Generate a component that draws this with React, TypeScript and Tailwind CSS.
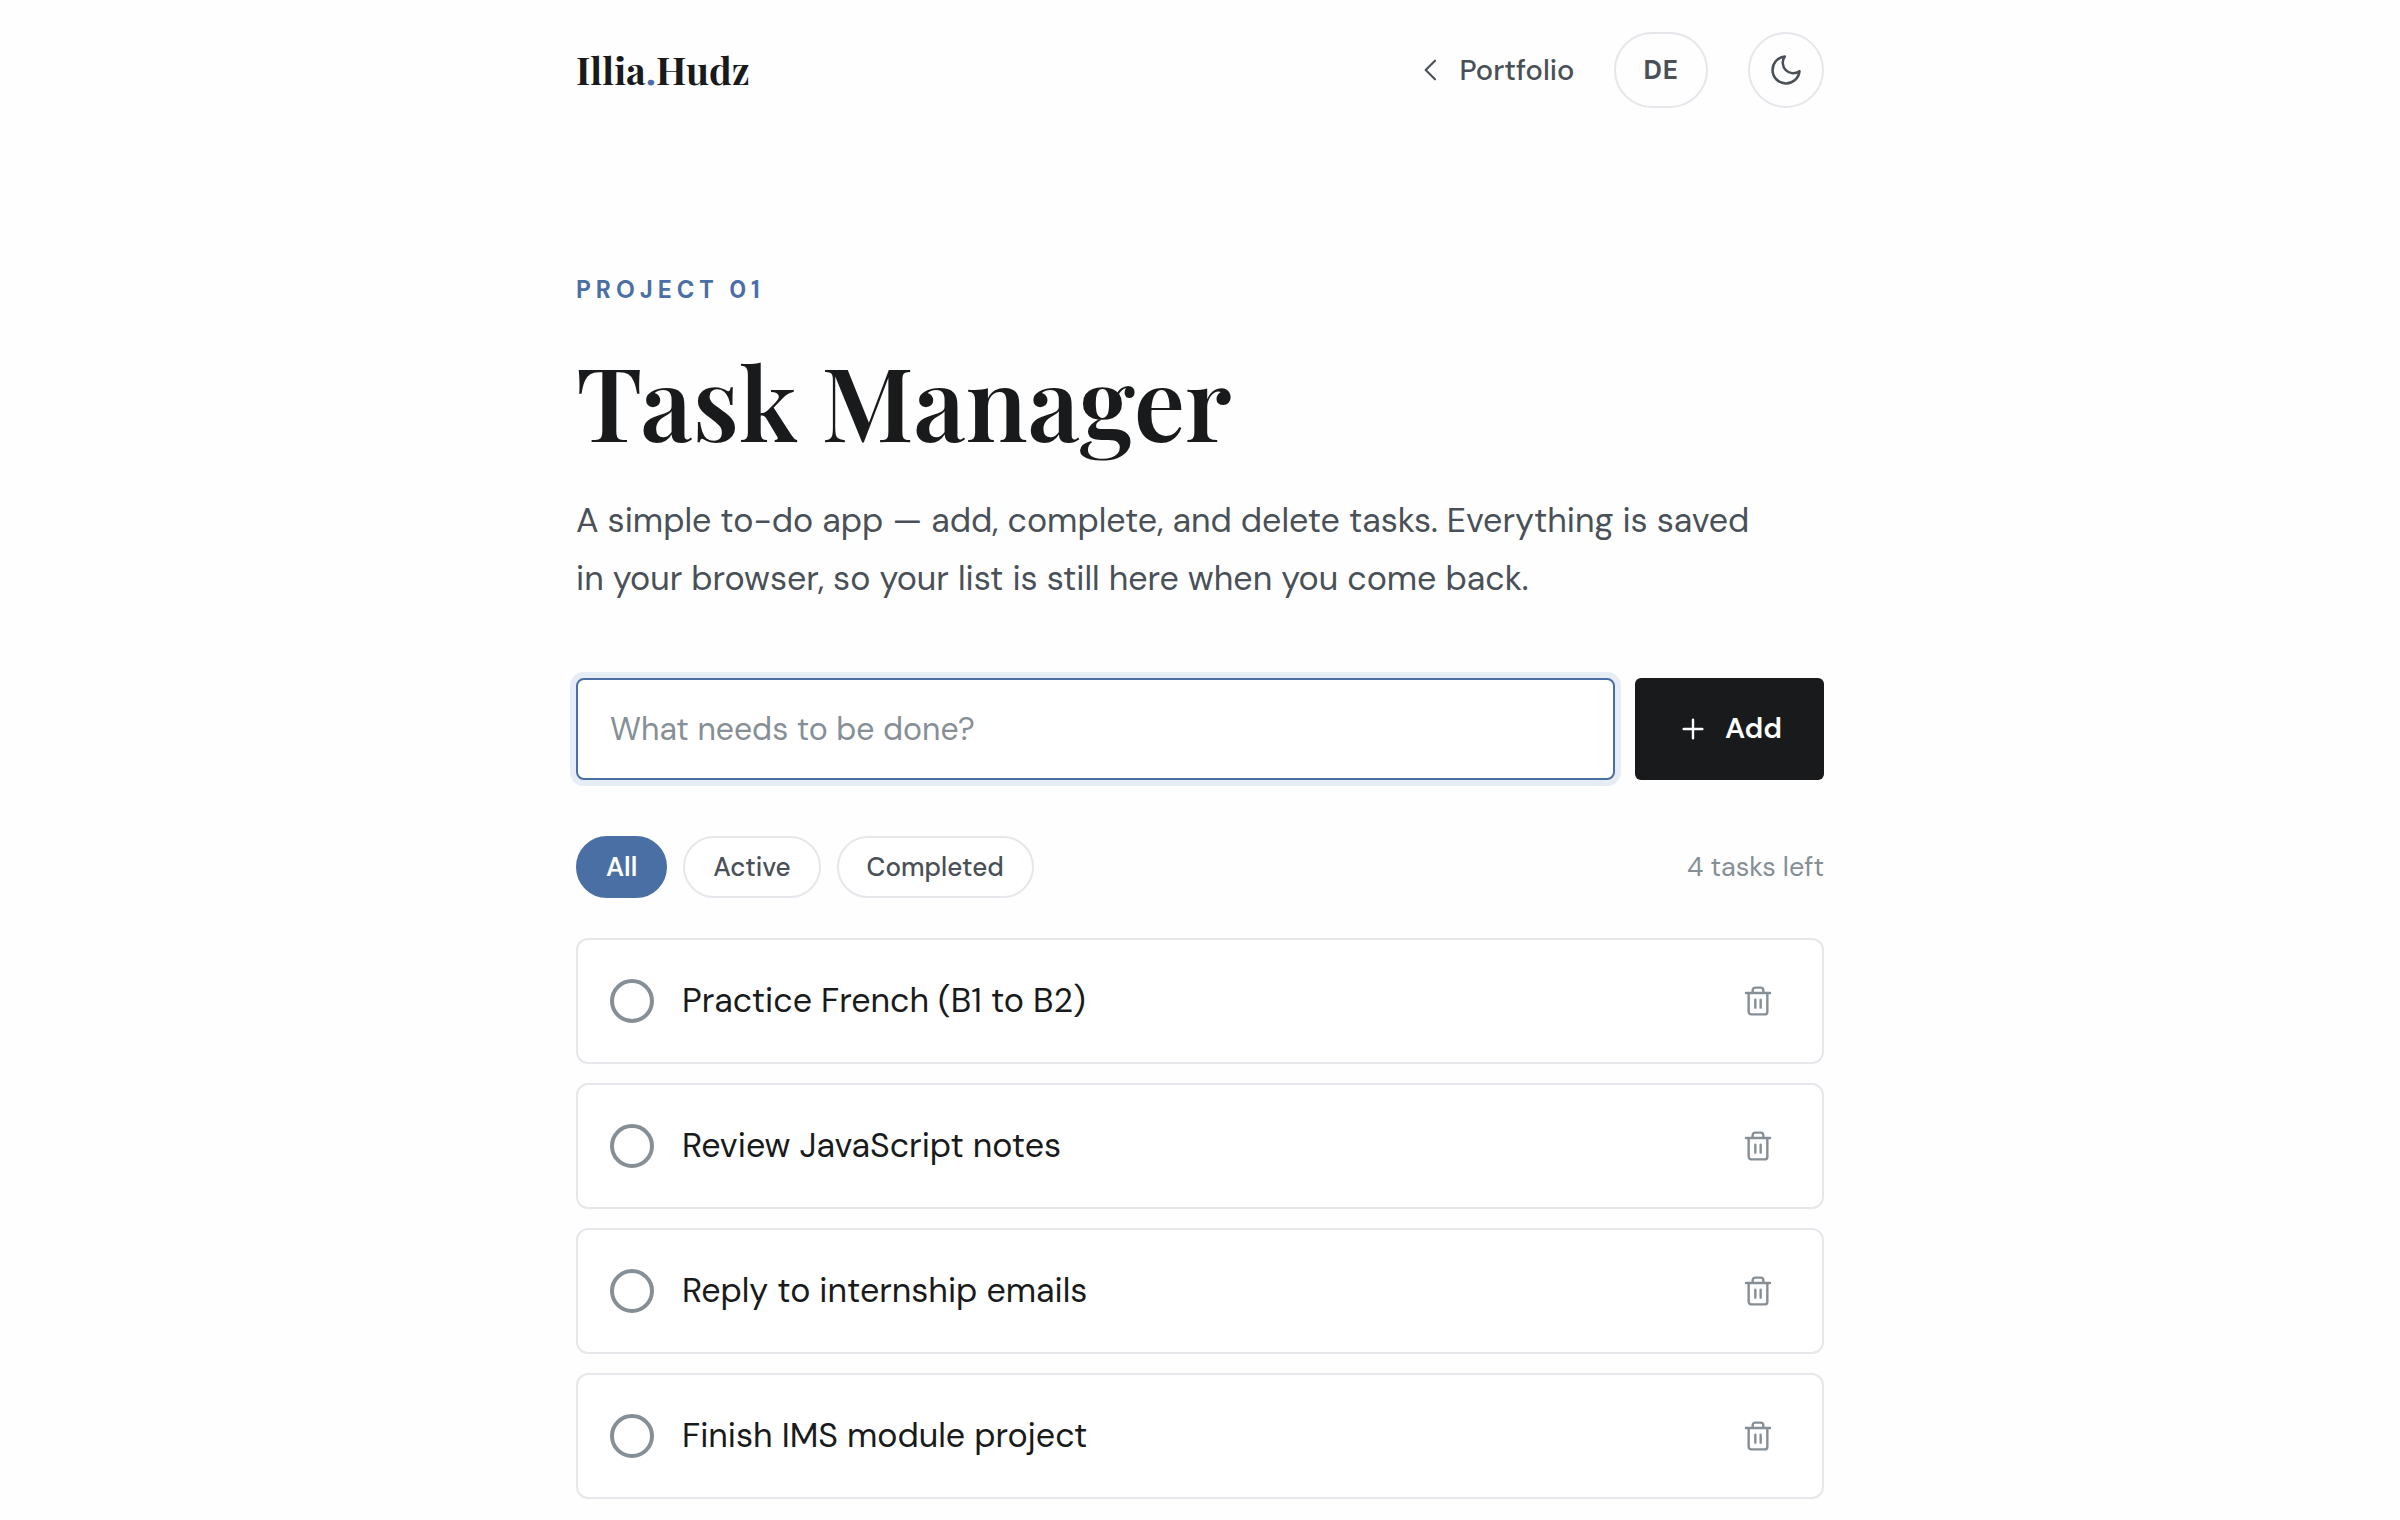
import { useState, type FormEvent } from 'react'

type Task = { id: number; text: string; done: boolean }
type Filter = 'All' | 'Active' | 'Completed'

const initialTasks: Task[] = [
  { id: 1, text: 'Practice French (B1 to B2)', done: false },
  { id: 2, text: 'Review JavaScript notes', done: false },
  { id: 3, text: 'Reply to internship emails', done: false },
  { id: 4, text: 'Finish IMS module project', done: false },
]

const filters: Filter[] = ['All', 'Active', 'Completed']

const stroke = {
  viewBox: '0 0 24 24',
  fill: 'none',
  stroke: 'currentColor',
  strokeLinecap: 'round',
  strokeLinejoin: 'round',
  'aria-hidden': true,
} as const

function Header() {
  return (
    <header className="flex items-center justify-between py-8">
      <a
        href="#home"
        className="font-['Playfair_Display','Liberation_Serif',serif] text-[38px] leading-[52px] font-bold"
      >
        Illia<span className="text-[#4a6fa5]">.</span>Hudz
      </a>
      <nav className="flex items-center gap-10 text-[#495057]">
        <a href="#portfolio" className="flex items-center gap-3 text-[29px] leading-10 font-medium">
          <svg {...stroke} strokeWidth={1.6} className="size-8">
            <path d="M15 19l-7-7 7-7" />
          </svg>
          Portfolio
        </a>
        <button
          type="button"
          className="h-[76px] rounded-full border-2 border-[#e6e6ec] px-[27px] text-[26px] font-bold tracking-[1px]"
        >
          DE
        </button>
        <button
          type="button"
          aria-label="Toggle dark theme"
          className="flex size-[76px] items-center justify-center rounded-full border-2 border-[#e6e6ec]"
        >
          <svg {...stroke} strokeWidth={1.7} className="size-9">
            <path d="M21 12.79A9 9 0 1 1 11.21 3 7 7 0 0 0 21 12.79z" />
          </svg>
        </button>
      </nav>
    </header>
  )
}

function TaskRow({ task, onToggle, onDelete }: { task: Task; onToggle: () => void; onDelete: () => void }) {
  return (
    <li className="flex h-[126px] items-center rounded-xl border-2 border-[#e6e6ec] bg-white px-8">
      <label className="flex min-w-0 flex-1 items-center gap-7 text-[34px] leading-[54px]">
        <input
          type="checkbox"
          checked={task.done}
          onChange={onToggle}
          className="size-11 shrink-0 appearance-none rounded-full border-4 border-[#868e96] checked:border-[#4a6fa5] checked:bg-[#4a6fa5]"
        />
        <span>{task.text}</span>
      </label>
      <button
        type="button"
        aria-label={`Delete ${task.text}`}
        onClick={onDelete}
        className="flex size-16 items-center justify-center text-[#868e96]"
      >
        <svg {...stroke} strokeWidth={1.8} className="size-8">
          <path d="M3 6h18M19 6v14a2 2 0 0 1-2 2H7a2 2 0 0 1-2-2V6M8 6V4a2 2 0 0 1 2-2h4a2 2 0 0 1 2 2v2M10 11v6M14 11v6" />
        </svg>
      </button>
    </li>
  )
}

export default function App() {
  const [tasks, setTasks] = useState(initialTasks)
  const [filter, setFilter] = useState<Filter>('All')
  const [draft, setDraft] = useState('')

  const left = tasks.filter((t) => !t.done).length
  const visible = tasks.filter((t) => filter === 'All' || t.done === (filter === 'Completed'))

  const add = (e: FormEvent) => {
    e.preventDefault()
    if (!draft.trim()) return
    setTasks([{ id: Date.now(), text: draft.trim(), done: false }, ...tasks])
    setDraft('')
  }

  return (
    <div className="min-h-screen bg-[#fefefe] px-12 font-['DM_Sans',Inter,sans-serif] text-[#181a1b]">
      <div className="mx-auto max-w-[1248px]">
        <Header />
        <main className="pt-[130px]">
          <p className="text-2xl leading-10 font-bold tracking-[5px] text-[#4a6fa5] uppercase">Project 01</p>
          <h1 className="mt-[30px] font-['Playfair_Display','Liberation_Serif',serif] text-[102px] leading-[120px] font-semibold">
            Task Manager
          </h1>
          <p className="mt-8 max-w-[1200px] text-[34px] leading-[58px] text-[#495057]">
            A simple to-do app — add, complete, and delete tasks. Everything is saved in your browser, so your list is
            still here when you come back.
          </p>

          <form onSubmit={add} className="mt-[70px] flex gap-5">
            <input
              type="text"
              aria-label="New task"
              placeholder="What needs to be done?"
              value={draft}
              onChange={(e) => setDraft(e.target.value)}
              className="h-[102px] min-w-0 flex-1 rounded-lg border-2 border-[#4a6fa5] bg-white px-8 text-[32px] ring-6 ring-[#e7edf5] outline-none placeholder:text-[#868e96]"
            />
            <button
              type="submit"
              className="flex items-center gap-4 rounded-md bg-[#181a1b] px-[42px] text-[29px] font-semibold text-white"
            >
              <svg {...stroke} strokeWidth={1.8} className="size-8">
                <path d="M12 5v14M5 12h14" />
              </svg>
              Add
            </button>
          </form>

          <div className="mt-14 flex items-center justify-between">
            <div className="flex gap-4">
              {filters.map((name) => (
                <button
                  key={name}
                  type="button"
                  aria-pressed={filter === name}
                  onClick={() => setFilter(name)}
                  className="h-[62px] rounded-full border-2 border-[#e6e6ec] bg-white px-7 text-[26px] font-medium text-[#495057] aria-pressed:border-[#4a6fa5] aria-pressed:bg-[#4a6fa5] aria-pressed:font-semibold aria-pressed:text-white"
                >
                  {name}
                </button>
              ))}
            </div>
            <p className="text-[27px] leading-10 text-[#868e96]">{left} tasks left</p>
          </div>

          <ul className="mt-10 flex flex-col gap-[19px]">
            {visible.map((task) => (
              <TaskRow
                key={task.id}
                task={task}
                onToggle={() => setTasks(tasks.map((t) => (t.id === task.id ? { ...t, done: !t.done } : t)))}
                onDelete={() => setTasks(tasks.filter((t) => t.id !== task.id))}
              />
            ))}
          </ul>
        </main>
      </div>
    </div>
  )
}
